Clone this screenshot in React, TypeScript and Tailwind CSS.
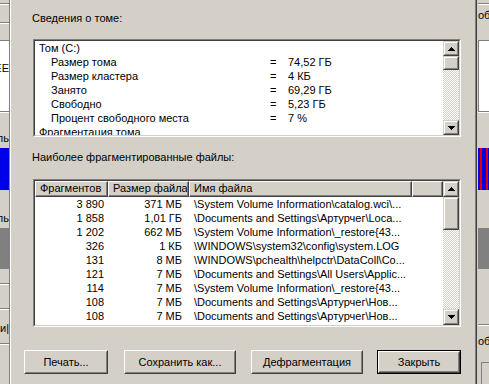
import type { ReactNode } from "react";

const rows = [
  ["3 890", "371 МБ", "\\System Volume Information\\catalog.wci\\..."],
  ["1 858", "1,01 ГБ", "\\Documents and Settings\\Артурчег\\Loca..."],
  ["1 202", "662 МБ", "\\System Volume Information\\_restore{43..."],
  ["326", "1 КБ", "\\WINDOWS\\system32\\config\\system.LOG"],
  ["131", "8 МБ", "\\WINDOWS\\pchealth\\helpctr\\DataColl\\Co..."],
  ["121", "7 МБ", "\\Documents and Settings\\All Users\\Applic..."],
  ["114", "7 МБ", "\\System Volume Information\\_restore{43..."],
  ["108", "7 МБ", "\\Documents and Settings\\Артурчег\\Нов..."],
  ["108", "7 МБ", "\\Documents and Settings\\Артурчег\\Нов..."],
  ["97", "6 МБ", "\\Documents and Settings\\Артурчег\\Нов..."],
];

const volume = [
  { label: "Том  (C:)", indent: false },
  { label: "Размер тома", value: "74,52 ГБ", indent: true },
  { label: "Размер кластера", value: "4 КБ", indent: true },
  { label: "Занято", value: "69,29 ГБ", indent: true },
  { label: "Свободно", value: "5,23 ГБ", indent: true },
  { label: "Процент свободного места", value: "7 %", indent: true },
  { label: "Фрагментация тома", indent: false },
];

function Arrow({ up }: { up: boolean }) {
  return (
    <svg width="7" height="4" viewBox="0 0 7 4" shapeRendering="crispEdges">
      {up ? (
        <path d="M3 0h1v1H3zM2 1h3v1H2zM1 2h5v1H1zM0 3h7v1H0z" fill="#000" />
      ) : (
        <path d="M0 0h7v1H0zM1 1h5v1H1zM2 2h3v1H2zM3 3h1v1H3z" fill="#000" />
      )}
    </svg>
  );
}

// classic raised box used by scrollbar buttons / thumb
function Raised({ className, children }: { className: string; children?: ReactNode }) {
  return (
    <div className={`border border-t-[#d4d0c8] border-l-[#d4d0c8] border-r-[#404040] border-b-[#404040] bg-[#d4d0c8] ${className}`}>
      <div className="h-full w-full border border-t-white border-l-white border-r-[#808080] border-b-[#808080] flex items-center justify-center">
        {children}
      </div>
    </div>
  );
}

function ScrollBar({ btn, thumb }: { btn: string; thumb: string }) {
  return (
    <div className="w-[16px] h-full flex flex-col shrink-0">
      <Raised className={btn}>
        <Arrow up />
      </Raised>
      <Raised className={thumb} />
      <div className="flex-1 bg-[repeating-conic-gradient(#ffffff_0_25%,#d4d0c8_0_50%)] bg-[length:2px_2px]" />
      <Raised className={btn}>
        <Arrow up={false} />
      </Raised>
    </div>
  );
}

function Sunken({ className, children }: { className: string; children: ReactNode }) {
  return (
    <div className={`border border-t-[#808080] border-l-[#808080] border-r-white border-b-white ${className}`}>
      <div className="h-full w-full border border-t-[#404040] border-l-[#404040] border-r-[#d4d0c8] border-b-[#d4d0c8] bg-white flex overflow-hidden">
        {children}
      </div>
    </div>
  );
}

function HeaderCell({ className, children }: { className: string; children?: ReactNode }) {
  return (
    <div className={`h-full border border-t-white border-l-white border-r-[#404040] border-b-[#404040] bg-[#d4d0c8] ${className}`}>
      <div className="h-full border-r border-b border-[#808080] flex items-center pl-[4px] whitespace-nowrap overflow-hidden">
        {children}
      </div>
    </div>
  );
}

function Button({ label, className, isDefault }: { label: string; className: string; isDefault?: boolean }) {
  const inner = (
    <div className="h-full w-full border border-t-white border-l-white border-r-[#404040] border-b-[#404040]">
      <div className="h-full w-full border border-t-[#d4d0c8] border-l-[#d4d0c8] border-r-[#808080] border-b-[#808080] flex items-center justify-center">
        {label}
      </div>
    </div>
  );
  return (
    <div className={`h-[24px] bg-[#d4d0c8] ${isDefault ? "border border-black" : ""} ${className}`}>
      {inner}
    </div>
  );
}

function LeftStrip() {
  return (
    <div className="w-[9px] shrink-0 flex flex-col overflow-hidden">
      <div className="h-[3px]" />
      <div className="h-px bg-[#808080]" />
      <div className="h-px bg-white" />
      <div className="h-[17px]" />
      <div className="h-px bg-[#808080]" />
      <div className="h-px bg-white" />
      <div className="h-[16px]" />
      <div className="h-[71px] bg-white border-t border-[#808080] flex justify-end pt-[21px]">
        <span className="whitespace-nowrap leading-[13px]">ЕЕ</span>
      </div>
      <div className="h-px bg-[#808080]" />
      <div className="h-px bg-white" />
      <div className="h-[35px] flex justify-end items-end pb-[3px]">
        <span className="whitespace-nowrap leading-[13px]">аль</span>
      </div>
      <div className="h-[42px] bg-[#0000e8]" />
      <div className="h-[38px] flex justify-end items-end pb-[3px]">
        <span className="whitespace-nowrap leading-[13px]">аль</span>
      </div>
      <div className="h-[41px] bg-[#808080]" />
      <div className="h-[14px]" />
      <div className="h-px bg-[#808080]" />
      <div className="h-px bg-white" />
      <div className="h-[23px]" />
      <div className="h-px bg-[#808080]" />
      <div className="h-px bg-white" />
      <div className="h-[25px] flex justify-end items-end">
        <span className="whitespace-nowrap leading-[13px]">ти|</span>
      </div>
      <div className="h-[8px]" />
      <div className="h-px bg-[#808080]" />
      <div className="h-px bg-white" />
    </div>
  );
}

function RightStrip() {
  return (
    <div className="w-[12px] shrink-0 flex flex-col overflow-hidden pl-px">
      <div className="h-[3px]" />
      <div className="h-px bg-[#808080]" />
      <div className="h-px bg-white" />
      <div className="h-[17px] flex items-end">
        <span className="whitespace-nowrap leading-[13px]">об</span>
      </div>
      <div className="h-[18px]" />
      <div className="h-[71px] bg-white border-t border-l border-[#808080]" />
      <div className="h-px bg-[#808080]" />
      <div className="h-px bg-white" />
      <div className="h-[35px]" />
      <div className="h-[42px] bg-[#0000e8] flex">
        <div className="w-[2px]" />
        <div className="w-[2px] bg-[#e00000]" />
        <div className="w-[4px]" />
        <div className="w-[2px] bg-[#e00000]" />
      </div>
      <div className="h-[38px]" />
      <div className="h-[41px] bg-[#808080]" />
      <div className="h-[55px]" />
      <div className="h-px bg-[#808080]" />
      <div className="h-px bg-white" />
      <div className="h-[22px] flex items-end">
        <span className="whitespace-nowrap leading-[13px]">об</span>
      </div>
      <div className="h-[14px]" />
      <div className="flex-1 ml-[3px] border-t border-l border-[#808080]" />
    </div>
  );
}

export default function App() {
  return (
    <div className="w-[489px] h-[384px] overflow-hidden bg-[#d4d0c8] flex text-[11px] text-black font-['Liberation_Sans',Arial,sans-serif]">
      <LeftStrip />
      <div className="w-px bg-[#808080]" />
      <div className="w-px bg-white" />
      <div className="w-[464px] flex flex-col">
        <div className="mt-[12px] h-[13px] leading-[13px] pl-[21px]">Сведения о томе:</div>
        <Sunken className="mt-[14px] ml-[22px] w-[428px] h-[98px]">
          <div className="flex-1 flex flex-col">
            {volume.map((v, i) => (
              <div key={i} className="h-[14px] shrink-0 leading-[14px] flex whitespace-nowrap">
                <div className={`w-[235px] ${v.indent ? "pl-[16px]" : "pl-[4px]"}`}>{v.label}</div>
                {v.value && (
                  <>
                    <div className="w-[18px]">=</div>
                    <div>{v.value}</div>
                  </>
                )}
              </div>
            ))}
          </div>
          <ScrollBar btn="h-[15px]" thumb="h-[14px]" />
        </Sunken>
        <div className="mt-[14px] h-[13px] leading-[13px] pl-[21px]">Наиболее фрагментированные файлы:</div>
        <Sunken className="mt-[15px] ml-[22px] w-[428px] h-[148px]">
          <div className="flex-1 flex flex-col min-w-0">
            <div className="h-[16px] shrink-0 flex">
              <HeaderCell className="w-[73px]">Фрагментов</HeaderCell>
              <HeaderCell className="w-[81px]">Размер файла</HeaderCell>
              <HeaderCell className="w-[223px]">Имя файла</HeaderCell>
              <HeaderCell className="flex-1" />
            </div>
            {rows.map((r, i) => (
              <div key={i} className="h-[14px] shrink-0 leading-[14px] flex whitespace-nowrap">
                <div className="w-[73px] text-right pr-[4px]">{r[0]}</div>
                <div className="w-[81px] text-right pr-[7px]">{r[1]}</div>
                <div className="w-[223px] pl-[5px] overflow-hidden">{r[2]}</div>
              </div>
            ))}
          </div>
          <ScrollBar btn="h-[16px]" thumb="h-[33px]" />
        </Sunken>
        <div className="mt-[23px] flex">
          <Button label="Печать..." className="ml-[13px] w-[84px]" />
          <Button label="Сохранить как..." className="ml-[16px] w-[112px]" />
          <Button label="Дефрагментация" className="ml-[15px] w-[112px]" />
          <Button label="Закрыть" className="ml-[14px] w-[84px]" isDefault />
        </div>
      </div>
      <div className="w-px bg-[#808080]" />
      <div className="w-px bg-[#404040]" />
      <RightStrip />
    </div>
  );
}
